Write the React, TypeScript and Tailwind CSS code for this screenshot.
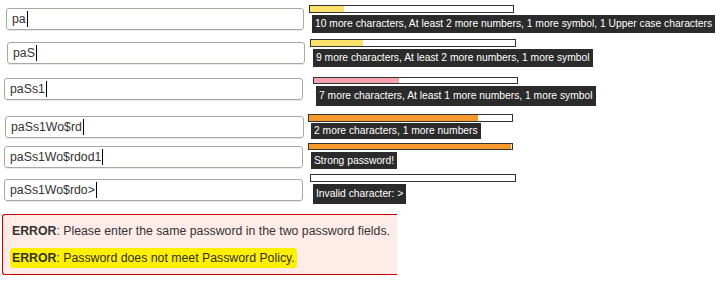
const rows = [
  {
    value: "pa",
    row: "h-[34px]",
    input: "ml-[6px] mt-[3px] w-[298px]",
    meter: "ml-[5px]",
    bar: "w-[205px] h-[8px]",
    fill: "w-[34px] bg-[#fbe36b]",
    tip: "mt-[2px] h-[18px]",
    text: "10 more characters, At least 2 more numbers, 1 more symbol, 1 Upper case characters",
  },
  {
    value: "paS",
    row: "h-[38px]",
    input: "ml-[7px] mt-[3px] w-[298px]",
    meter: "ml-[5px]",
    bar: "w-[206px] h-[8px]",
    fill: "w-[52px] bg-[#fbe36b]",
    tip: "mt-[2px] h-[18px]",
    text: "9 more characters, At least 2 more numbers, 1 more symbol",
  },
  {
    value: "paSs1",
    row: "h-[37px]",
    input: "ml-[4px] mt-[1px] w-[299px]",
    meter: "ml-[10px]",
    bar: "w-[205px] h-[7px]",
    fill: "w-[85px] bg-[#f5a3ad]",
    tip: "mt-[2px] h-[20px]",
    text: "7 more characters, At least 1 more numbers, 1 more symbol",
  },
  {
    value: "paSs1Wo$rd",
    row: "h-[29px]",
    input: "ml-[5px] mt-[2px] w-[299px]",
    meter: "ml-[4px]",
    bar: "w-[205px] h-[8px]",
    fill: "w-[169px] bg-[#f79a2e]",
    tip: "mt-[1px] h-[16px]",
    text: "2 more characters, 1 more numbers",
  },
  {
    value: "paSs1Wo$rdod1",
    row: "h-[31px]",
    input: "ml-[4px] mt-[3px] w-[299px]",
    meter: "ml-[5px]",
    bar: "w-[205px] h-[7px]",
    fill: "w-[202px] bg-[#f79a2e]",
    tip: "mt-[2px] h-[17px]",
    text: "Strong password!",
  },
  {
    value: "paSs1Wo$rdo>",
    row: "h-[40px]",
    input: "ml-[4px] mt-[5px] w-[299px]",
    meter: "ml-[7px]",
    bar: "w-[206px] h-[8px]",
    fill: "w-0",
    tip: "mt-[2px] h-[20px]",
    text: "Invalid character: >",
  },
];

function PasswordRow({ r }: { r: (typeof rows)[number] }) {
  return (
    <div className={`flex items-start ${r.row}`}>
      <div className={`shrink-0 ${r.input}`}>
        <div className="h-[22px] rounded-[3px] border border-[#a3aba3] bg-white pl-[5px] flex items-center text-[12.3px] text-[#333]">
          <span>{r.value}</span>
          <span className="ml-[1px] w-px h-[16px] bg-black" />
        </div>
        <div className="mx-[2px] h-px bg-[#e6e6e6]" />
      </div>
      <div className={`shrink-0 flex flex-col items-start ${r.meter}`}>
        <div className={`border border-[#333] bg-white ${r.bar}`}>
          <div className={`h-full ${r.fill}`} />
        </div>
        <div
          className={`ml-[3px] px-[3px] bg-[#2b2b2b] text-white text-[10.3px] whitespace-nowrap flex items-center ${r.tip}`}
        >
          {r.text}
        </div>
      </div>
    </div>
  );
}

export default function App() {
  return (
    <div className="w-[720px] h-[282px] bg-white overflow-hidden pt-[5px] font-['Liberation_Sans',Arial,sans-serif]">
      {rows.map((r) => (
        <PasswordRow key={r.value} r={r} />
      ))}
      <div className="ml-[2px] w-[395px] h-[61px] rounded-l-[3px] border border-r-0 border-[#cc0000] bg-[#ffebe8] pl-[9px] pt-[9px] text-[12.3px] text-[#333]">
        <p className="leading-[15px]">
          <b>ERROR</b>: Please enter the same password in the two password fields.
        </p>
        <p className="mt-[9px] -ml-[2px] inline-block px-[2px] leading-[20px] bg-[#fff000] rounded-[4px]">
          <b>ERROR</b>: Password does not meet Password Policy.
        </p>
      </div>
    </div>
  );
}
